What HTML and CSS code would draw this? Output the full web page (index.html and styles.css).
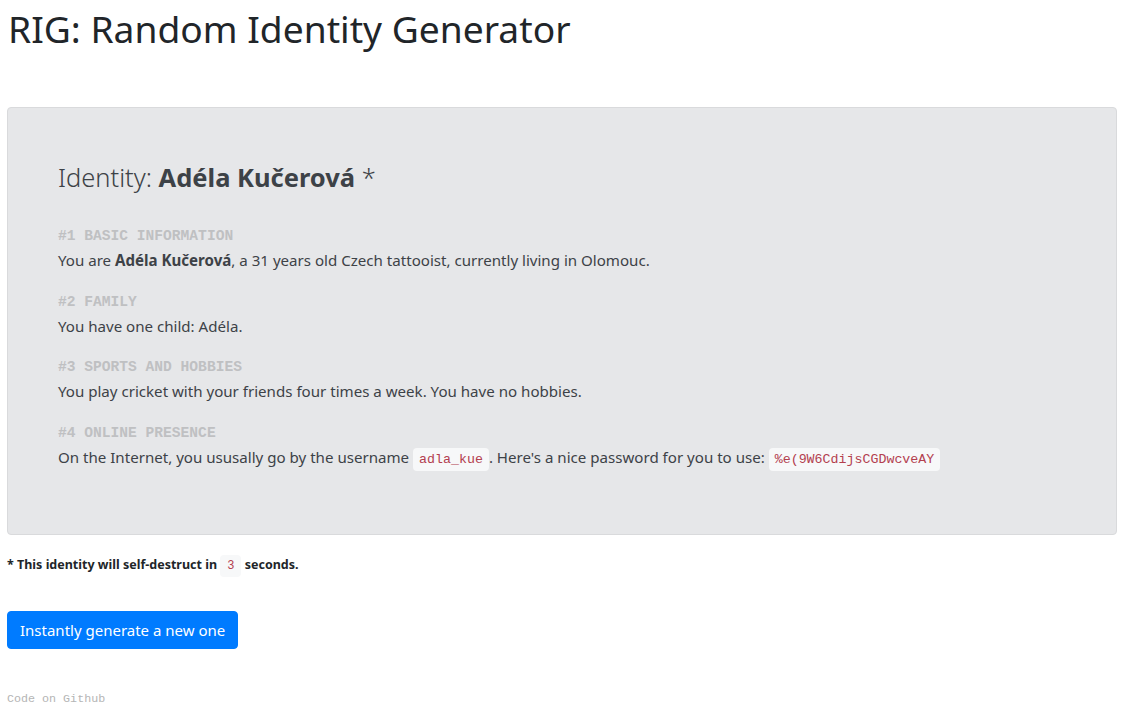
FILE: index.html
```html
<!DOCTYPE html>
<html lang="en">
<head>
<meta charset="utf-8">
<title>RIG: Random Identity Generator</title>
<link rel="stylesheet" href="styles.css">
</head>
<body>
<div class="page">
  <h1 class="title">RIG: Random Identity Generator</h1>
  <section class="jumbo">
    <h2 class="identity">Identity: <strong>Adéla Kučerová</strong> *</h2>
    <div class="block">
      <div class="label">#1 BASIC INFORMATION</div>
      <p class="text">You are <strong>Adéla Kučerová</strong>, a 31 years old Czech tattooist, currently living in Olomouc.</p>
    </div>
    <div class="block">
      <div class="label">#2 FAMILY</div>
      <p class="text">You have one child: Adéla.</p>
    </div>
    <div class="block">
      <div class="label">#3 SPORTS AND HOBBIES</div>
      <p class="text">You play cricket with your friends four times a week. You have no hobbies.</p>
    </div>
    <div class="block">
      <div class="label">#4 ONLINE PRESENCE</div>
      <p class="text">On the Internet, you ususally go by the username <code class="code">adla_kue</code>. Here's a nice password for you to use: <code class="code">%e(9W6CdijsCGDwcveAY</code></p>
    </div>
  </section>
  <p class="note">* This identity will self-destruct in <code class="code small">3</code> seconds.</p>
  <button class="btn" type="button">Instantly generate a new one</button>
  <div class="footer">Code on Github</div>
</div>
</body>
</html>
```
FILE: styles.css
```css
html, body {
  margin: 0;
  padding: 0;
  background: #fff;
}
body {
  font-family: "Noto Sans", "Open Sans", sans-serif;
  color: #212529;
}
.page {
  padding: 0 7px;
}
.title {
  margin: 0;
  padding-top: 6px;
  padding-left: 1px;
  font-size: 37.2px;
  line-height: 46px;
  font-weight: 400;
  color: #212529;
}
.jumbo {
  margin-top: 55px;
  background: #e6e7e9;
  border: 1px solid #d9dadc;
  border-radius: 4px;
  padding: 52px 50px 45px;
  color: #3d4247;
}
.identity {
  margin: 0 0 30px;
  font-size: 25.5px;
  line-height: 34px;
  font-weight: 300;
  color: #3d4247;
}
.identity strong {
  font-weight: 700;
}
.block {
  margin-bottom: 17.5px;
}
.label {
  font-family: "Liberation Mono", monospace;
  font-weight: 700;
  font-size: 14.6px;
  line-height: 24px;
  color: #bfc0c2;
}
.text {
  margin: 0;
  font-size: 15.1px;
  line-height: 24px;
}
.code {
  font-family: "Liberation Mono", monospace;
  font-size: 13.3px;
  color: #b3404f;
  background: #f7f8f9;
  border-radius: 4px;
  padding: 4px 6px;
}
.note {
  margin: 18px 0 0;
  font-size: 12.5px;
  font-weight: 700;
  line-height: 24px;
  color: #212529;
}
.code.small {
  font-weight: 400;
  font-size: 12px;
  padding: 4px 7px;
}
.btn {
  display: block;
  margin-top: 33px;
  background: #007bff;
  color: #fff;
  border: 1px solid #007bff;
  border-radius: 4px;
  font-family: "Noto Sans", "Open Sans", sans-serif;
  font-size: 15px;
  line-height: 24px;
  padding: 6px 12px;
}
.footer {
  margin-top: 40px;
  font-family: "Liberation Mono", monospace;
  font-size: 11.7px;
  color: #b5b5b5;
  line-height: 20px;
}
```
